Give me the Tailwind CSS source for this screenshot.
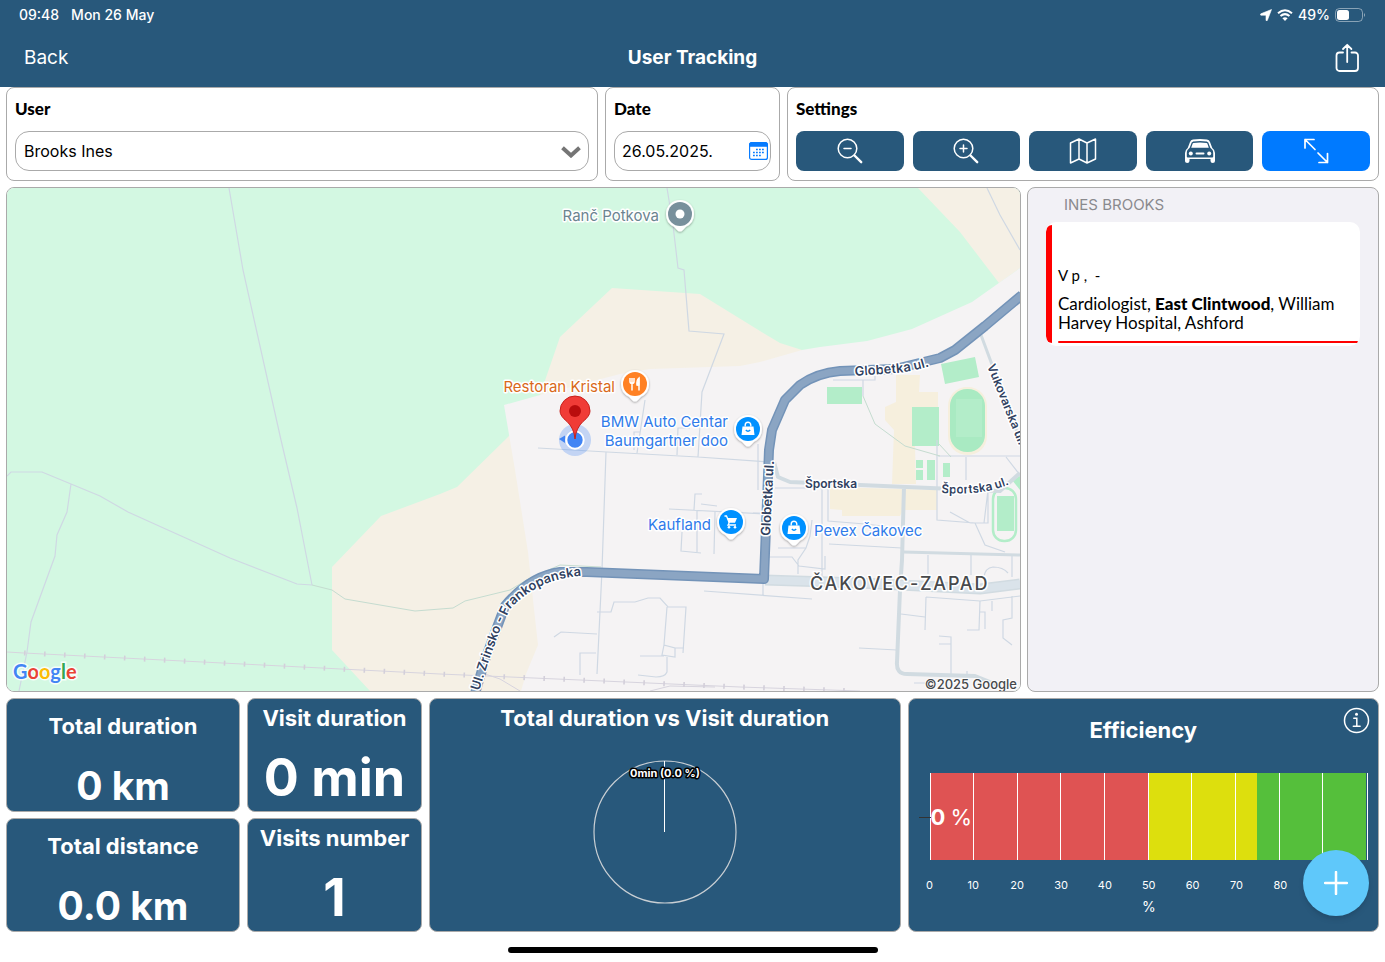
<!DOCTYPE html>
<html lang="en">
<head>
    <meta charset="UTF-8">
    <meta name="viewport" content="width=device-width, initial-scale=1.0">
    <title>User Tracking</title>
    <script src="https://cdn.jsdelivr.net/npm/@tailwindcss/browser@4"></script>
</head>
<body class="flex min-h-screen flex-col bg-white font-['Inter',sans-serif] text-black">
    <!-- Status bar + navigation -->
    <header class="bg-[#28587b] text-white">
        <div class="flex h-[29px] items-center justify-between px-[19px] text-[14px] font-medium">
            <div class="flex gap-3">
                <span>09:48</span>
                <span>Mon 26 May</span>
            </div>
            <div class="flex items-center gap-[5px]">
                <svg class="h-3 w-3" viewBox="0 0 12 12" fill="currentColor"><path d="M11.500.5 7.300 11.500Q6.600 12.400 6 11.500V6.200H.8Q-.4 5.600.8 4.800Z" stroke="currentColor" stroke-width=".6"/></svg>
                <svg class="h-3 w-4" viewBox="0 0 16 12" fill="none" stroke="currentColor" stroke-width="2"><path d="M1 4.300Q8-1.800 15 4.300M3.500 7Q8 3.200 12.500 7"/><path d="M8 12 5.400 9.300Q8 7.300 10.600 9.300Z" fill="currentColor" stroke="none"/></svg>
                <span>49%</span>
                <svg class="h-[14px] w-[31px]" viewBox="0 0 31 14"><rect x=".5" y=".5" width="27" height="13" rx="4" fill="none" stroke="#fff" stroke-opacity=".45"/><rect x="2" y="2" width="12" height="10" rx="2.500" fill="#fff"/><path d="M29 5v4q2-2 0-4" fill="#fff" fill-opacity=".5"/></svg>
            </div>
        </div>
        <div class="grid h-[58px] grid-cols-3 items-center px-6">
            <a href="#" class="justify-self-start text-[19px]">Back</a>
            <h1 class="justify-self-center text-[19px] font-bold">User Tracking</h1>
            <button type="button" aria-label="Share" class="justify-self-end">
                <svg class="h-[30px] w-7" viewBox="0 0 28 30" fill="none" stroke="#fff" stroke-width="1.800" stroke-linecap="round" stroke-linejoin="round"><path d="M10 9.500H6.500A3 3 0 0 0 3.500 12.500V25A3 3 0 0 0 6.500 28H22A3 3 0 0 0 25 25V12.500A3 3 0 0 0 22 9.500H18.500M14.200 19V2M10 6l4.200-4.200L18.400 6"/></svg>
            </button>
        </div>
    </header>

    <main class="flex flex-1 flex-col gap-[6px] px-[6px]">
        <!-- Filters -->
        <div class="grid grid-cols-[1fr_175px_1fr] gap-[7px]">
            <section class="h-[94px] rounded-lg border border-[#aaa] px-2 pt-[9px]">
                <label for="user" class="block font-['Lato',sans-serif] text-[17px] leading-6 font-black">User</label>
                <div class="relative mt-[10px]">
                    <select id="user" class="block h-10 w-full appearance-none rounded-[14px] border border-[#aaa] bg-white px-2 text-base">
                        <option>Brooks Ines</option>
                    </select>
                    <svg class="pointer-events-none absolute top-[15px] right-2 h-3 w-5" viewBox="0 0 20 12" fill="none" stroke="#757575" stroke-width="4"><path d="M1.500 1.800 10 9.500 18.500 1.800"/></svg>
                </div>
            </section>
            <section class="h-[94px] rounded-lg border border-[#aaa] px-2 pt-[9px]">
                <label for="date" class="block font-['Lato',sans-serif] text-[17px] leading-6 font-black">Date</label>
                <div class="relative mt-[10px]">
                    <input id="date" type="text" value="26.05.2025." class="block h-10 w-full rounded-[14px] border border-[#aaa] bg-white pr-7 pl-[7px] text-base">
                    <svg class="pointer-events-none absolute top-[11px] right-[3px] h-[18px] w-[19px]" viewBox="0 0 19 18" fill="none"><rect x=".6" y=".6" width="17.800" height="16.800" rx="2" fill="#fff" stroke="#087cff" stroke-width="1.200"/><path d="M.6 4.200V2.500Q.6.6 2.500.6h14q1.900 0 1.900 1.900v1.700Z" fill="#087cff" stroke="#087cff"/><path d="M7 7.500h9M4 10.500h12M4 13.500h9" stroke="#087cff" stroke-width="1.500" stroke-dasharray="1.800 1.200"/></svg>
                </div>
            </section>
            <section class="h-[94px] rounded-lg border border-[#aaa] px-2 pt-[9px]">
                <h2 class="font-['Lato',sans-serif] text-[17px] leading-6 font-black">Settings</h2>
                <div class="mt-[10px] grid grid-cols-5 gap-[9px]">
                    <button type="button" aria-label="Zoom out" class="flex h-10 items-center justify-center rounded-lg bg-[#28587b]">
                        <svg class="h-[26px] w-[26px]" viewBox="0 0 26 26" fill="none" stroke="#fff" stroke-width="1.500" stroke-linecap="round"><circle cx="10.500" cy="10.500" r="9.300"/><path d="M7 10.500h7"/><path d="m17.500 17.500 6.700 6.700" stroke-width="2.400"/></svg>
                    </button>
                    <button type="button" aria-label="Zoom in" class="flex h-10 items-center justify-center rounded-lg bg-[#28587b]">
                        <svg class="h-[26px] w-[26px]" viewBox="0 0 26 26" fill="none" stroke="#fff" stroke-width="1.500" stroke-linecap="round"><circle cx="10.500" cy="10.500" r="9.300"/><path d="M7 10.500h7M10.500 7v7"/><path d="m17.500 17.500 6.700 6.700" stroke-width="2.400"/></svg>
                    </button>
                    <button type="button" aria-label="Map type" class="flex h-10 items-center justify-center rounded-lg bg-[#28587b]">
                        <svg class="h-[26px] w-[28px]" viewBox="0 0 28 26" fill="none" stroke="#fff" stroke-width="1.500" stroke-linejoin="round"><path d="m1.500 5 8.500-4 8 4 8.500-4v20L18 25l-8-4-8.500 4ZM10 1v20M18 5v20"/></svg>
                    </button>
                    <button type="button" aria-label="Traffic" class="flex h-10 items-center justify-center rounded-lg bg-[#28587b]">
                        <svg class="h-6 w-[30px]" viewBox="0 0 30 24"><path fill="#fff" fill-rule="evenodd" d="M8 0.500Q15-.5 22 .5q2.200.4 3 2.500l2.300 6Q30 11 30 14v8q0 2-2.200 2T25.500 22v-2h-21v2q0 2-2.300 2T0 22v-8q0-3 2.700-5L5 3q.8-2.100 3-2.500ZM8.200 2.500 6.700 3.600 4.700 8.800 2.500 11Q1.800 12 1.800 14v3.500q0 1 1 1H27.200q1 0 1-1V14q0-2-.7-3L25.300 8.800 23.300 3.600 21.800 2.500Q15 1.500 8.200 2.500Z"/><path fill="#fff" d="M8.500 4Q15 3 21.500 4q.8.200 1 1l1.300 3.700H6.200L7.500 5q.2-.8 1-1Z"/><circle cx="5.800" cy="14.500" r="2" fill="#fff"/><circle cx="24.200" cy="14.500" r="2" fill="#fff"/><path d="M11.500 14.500h7" stroke="#fff" stroke-width="2" stroke-linecap="round"/></svg>
                    </button>
                    <button type="button" aria-label="Fit route" class="flex h-10 items-center justify-center rounded-lg bg-[#007aff]">
                        <svg class="h-[26px] w-[26px]" viewBox="0 0 26 26" fill="none" stroke="#fff" stroke-width="1.700" stroke-linecap="round" stroke-linejoin="round"><path d="M2 10V1.500h9M2 1.500 12 11.500M24.500 15.500V24.500H16M24.500 24.500 15 15"/></svg>
                    </button>
                </div>
            </section>
        </div>

        <div class="grid min-h-[400px] flex-1 grid-cols-[1fr_352px] gap-[6px]">
            <!-- Map -->
            <section aria-label="Map" class="relative overflow-hidden rounded-lg border border-[#aaa]">
                <svg class="absolute inset-0 h-full w-full font-['Inter',sans-serif]" viewBox="7 188 1013 503" preserveAspectRatio="xMidYMid slice" fill="none">
                    <defs>
                        <path id="pin" d="M0 17.500Q-1.500 17.500-3 16L-6 12.700Q-14 9-14 0A14 14 0 0 1 14 0Q14 9 6 12.700L3 16Q1.500 17.500 0 17.500Z" fill="#fff" filter="url(#drop)"/>
                        <filter id="drop" x="-30%" y="-30%" width="160%" height="160%"><feDropShadow dx="0" dy="1" stdDeviation="1" flood-opacity=".35"/></filter>
                        <g id="bag"><path d="M-5.500-2.500h11l1 8.500h-13Z" fill="#fff"/><path d="M-2.800-2.500V-4a2.800 2.800 0 0 1 5.600 0v1.500" stroke="#fff" stroke-width="1.400"/><path d="M-2.200 1q2.200 2.500 4.400 0" stroke="#0091ff" stroke-width="1.300"/></g>
                        <path id="zrinsko" d="M479 691 488 663 500 630 510 609C530 588 552 577 590 575"/>
                        <path id="globetka" d="M855 376 895 373Q920 371 940 362"/>
                        <path id="sportska" d="M941 493Q985 496 1012 483"/>
                    </defs>
                    <!-- land cover -->
                    <rect x="7" y="188" width="1013" height="503" fill="#d3f8e2"/>
                    <path fill="#f5f0e5" d="M918 188 960 232 999 283 1020 268V188ZM370 691 332 650V567L381 516 440 494 457 487 508 437 540 395 560 337 612 288 700 294 760 331 780 343 802 350 700 500 560 691Z"/>
                    <path fill="#f5f3f4" d="M504 405 540 395 620 374 650 369 740 366 760 362 802 350 820 347 867 341 912 329 972 302 1020 268V691H521L526 674 538 645 533 600 528 552 515 470Z"/>
                    <path fill="#f6efdd" d="M896 375H920L919 392H938V446H915L916 484H892L894 430 885 420V407L896 402ZM830 487 937 490V510H903L900 516H842V510L830 509Z"/>
                    <rect x="948" y="387" width="39" height="68" rx="19" fill="#f6efdd"/>
                    <rect x="950" y="389" width="35" height="63" rx="17" fill="#a9eac2"/>
                    <path fill="#b3edc9" d="M956 399h26v38h-26ZM827 387h35v17h-35ZM912 407h27v39h-27ZM941 364 975 357 979 377 945 384ZM916 460h7v8h-7ZM916 470h7v10h-7ZM927 460h8v20h-8ZM943 463h7v14h-7ZM997 496h17v35h-17ZM1012 480 1020 476V490Z"/>
                    <rect x="993" y="488" width="23" height="53" rx="11" stroke="#b3edc9" stroke-width="2.500"/>
                    <!-- paths and minor streets -->
                    <g stroke="#cfd8e3" stroke-width="1.200">
                        <path d="M229 188 243 270 281 440 297 508 312 585M987 188 1000 215 1020 250"/>
                        <path d="M7 476 11 472H42L71 484 100 496 128 512 230 558 297 584 312 585M71 484 67 512 57 535 55 556 31 622 27 652 19 691"/>
                        <path d="M667 188 673 225 678 268 684 270 689 331 724 334 702 392 698 457M538 448 607 452 698 457 768 462M606 452 602 570 597 674M645 400 637 453M677 455 678 428H690M634 450V432H640"/>
                        <path d="M758 444V490M669 509 768 514M694 510 695 494H702M701 504 717 506M697 511V552M715 512 714 554M682 532 681 551 701 553"/>
                        <path d="M597 612H611L614 602H635L648 598H660L668 607H686L683 653M667 607 664 645 675 648V657L662 655 664 645M675 648H684M640 656H664M667 657V672Q665 677 656 677L638 675M597 634 561 632 554 637M596 653H580V675M704 591 812 599M763 583V595"/>
                        <path d="M753 513H770M775 488H822V578M828 488V521L865 524 900 528M778 548H806L810 536 812 520M769 557H792L799 566 825 569V556M798 574V560L806 548M829 544 902 548M870 528Q880 537 887 528"/>
                        <path d="M833 380H875V376M863 380V396M937 440V520L975 523 985 545 1005 552M950 512 970 523H988V490L984 523M966 457V480M938 456H1020M928 555V574M971 555V575M1012 555V577M984 577Q985 568 993 567 1003 567 1008 573M926 597 980 601 1020 596M926 597 925 630M980 601 979 630H967M980 612H985V629M992 601V611M1012 596V618L1003 620V638L1012 645M901 614 925 617M939 636 951 637V675M939 644H951M859 648 897 650M967 671V676M914 683H925M1006 457 1020 475"/>
                    </g>
                    <path d="M312 585 332 590 345 599 415 611 453 608 465 601 510 590 530 578 560 565 601 567M863 396 875 424 905 446 940 456M939 444 951 457" stroke="#c5dcd0"/>
                    <path d="M7 652 24 653 440 674 580 680 740 687 860 691M485 674 500 679 520 691M650 691 670 686 715 687" stroke="#d7d4de"/>
                    <path d="M24 653 440 674 580 680 740 687 860 691" stroke="#d3cfda" stroke-width="5" stroke-dasharray="1.600 18.400"/>
                    <!-- streets -->
                    <g stroke="#d1dbe1" stroke-linejoin="round">
                        <path stroke-width="4" d="M774 462 778 477 790 482 1000 491 1020 473M904 487 902 560 900 590 897 662Q896 674 907 674L975 676 1000 686"/>
                        <path stroke-width="3" d="M903 552 1020 555M981 335 1020 440"/>
                        <path stroke-width="11" d="M765 580 860 583 980 589 1020 584"/>
                    </g>
                    <path d="M765 580 860 583 980 589 1020 584" stroke="#dae3ea" stroke-width="8"/>
                    <!-- main road -->
                    <g stroke-linejoin="round">
                        <path stroke="#7393b8" stroke-width="10" d="M474 697 485 660 499 622 505 606Q530 576 560 572L587 572 764 579 769 450 772 430 785 400 800 385Q817 373 840 371L895 369 940 358 955 350 985 326 1022 295"/>
                        <path stroke="#8ba5c3" stroke-width="7" d="M474 697 485 660 499 622 505 606Q530 576 560 572L587 572 764 579 769 450 772 430 785 400 800 385Q817 373 840 371L895 369 940 358 955 350 985 326 1022 295"/>
                    </g>
                    <!-- street names -->
                    <g class="fill-[#30415f] stroke-white font-semibold [paint-order:stroke]" font-size="13" stroke-width="3" stroke-linejoin="round">
                        <text><textPath href="#zrinsko">Ul. Zrinsko - Frankopanska</textPath></text>
                        <text><textPath href="#globetka">Globetka ul.</textPath></text>
                        <text font-size="12"><textPath href="#sportska">Športska ul.</textPath></text>
                        <text transform="translate(770 536) rotate(-87)">Globetka ul.</text>
                        <text font-size="12" x="805" y="488">Športska</text>
                        <text font-size="12" transform="translate(987 366) rotate(68)">Vukovarska ul.</text>
                        <text class="fill-[#47494c] font-medium tracking-widest" font-size="18" x="810" y="590">ČAKOVEC-ZAPAD</text>
                    </g>
                    <!-- places -->
                    <g class="stroke-white [paint-order:stroke]" font-size="15" stroke-width="3" stroke-linejoin="round">
                        <text class="fill-[#6b8490]" x="659" y="221" text-anchor="end">Ranč Potkova</text>
                        <text class="fill-[#d9691a]" x="615" y="392" text-anchor="end">Restoran Kristal</text>
                        <g class="fill-[#2f7bea]">
                            <text x="728" y="427" text-anchor="end">BMW Auto Centar</text>
                            <text x="728" y="446" text-anchor="end">Baumgartner doo</text>
                            <text x="711" y="530" text-anchor="end">Kaufland</text>
                            <text x="814" y="536">Pevex Čakovec</text>
                        </g>
                    </g>
                    <g transform="translate(680 214)"><use href="#pin"/><circle r="12" fill="#78909c"/><circle r="4.500" fill="#fff"/></g>
                    <g transform="translate(635 384)"><use href="#pin"/><circle r="12" fill="#ff8124"/><path d="M-5-6V-2.500Q-5-.5-3-.5T-1-2.500V-6M-3-6V6.500M4 6.500V-6Q1.500-4 2 1H4" stroke="#fff" stroke-width="1.500"/><path d="M4.500-6Q1.500-4 2 1.500H4.500Z" fill="#fff"/></g>
                    <g transform="translate(748 429)"><use href="#pin"/><circle r="12" fill="#0091ff"/><use href="#bag"/></g>
                    <g transform="translate(794 528)"><use href="#pin"/><circle r="12" fill="#0091ff"/><use href="#bag"/></g>
                    <g transform="translate(731 522)"><use href="#pin"/><circle r="12" fill="#0091ff"/><path d="M-3.500-4H6L4 .8H-2.500Z" fill="#fff"/><path d="M-6.500-6H-4.500L-1.800.8-3 3H5" stroke="#fff" stroke-width="1.300"/><circle cx="-2" cy="5.300" r="1.300" fill="#fff"/><circle cx="4" cy="5.300" r="1.300" fill="#fff"/></g>
                    <!-- current position -->
                    <circle cx="575" cy="440" r="16" fill="#4285f4" fill-opacity=".28"/>
                    <path d="M559 439 565 435.500V443Z" fill="#4285f4"/>
                    <circle cx="575" cy="440" r="8.700" fill="#4285f4" stroke="#fff" stroke-width="2"/>
                    <path d="M575 439Q574 428 567 421.500 560 416 560 411A15 15 0 0 1 590 411Q590 416 583 421.500 576 428 575 439Z" fill="#f03c37" stroke="#c7201c"/>
                    <circle cx="575" cy="411" r="6" fill="#b90d0d"/>
                    <!-- attribution -->
                    <g class="font-['Lato',sans-serif] stroke-white/80 font-bold [paint-order:stroke]" font-size="20" stroke-width="3">
                        <text x="13" y="679"><tspan fill="#4285f4">G</tspan><tspan fill="#ea4335">o</tspan><tspan fill="#fbbc05">o</tspan><tspan fill="#4285f4">g</tspan><tspan fill="#34a853">l</tspan><tspan fill="#ea4335">e</tspan></text>
                    </g>
                    <text class="fill-[#47494c] stroke-white/80 font-medium [paint-order:stroke]" font-size="13" stroke-width="2" x="1017" y="689" text-anchor="end">©2025 Google</text>
                </svg>
            </section>

            <!-- Visits -->
            <aside class="rounded-lg border border-[#aaa] bg-[#f2f1f6] px-[18px] pt-2">
                <h2 class="pl-[18px] text-[15px] leading-[18px] text-[#8a8a8e]">INES BROOKS</h2>
                <article class="relative mt-2 h-[124px] overflow-hidden rounded-[10px] bg-white pt-[43px] pl-3 font-['Lato',sans-serif]">
                    <span class="absolute top-[3px] left-0 h-[118px] w-[6px] rounded-l-md bg-[#ff0000]"></span>
                    <p class="text-[15px] leading-5">V p ,&nbsp; -</p>
                    <p class="mt-[9px] text-[17px] leading-[19px]">Cardiologist, <b class="font-black">East Clintwood</b>, William Harvey Hospital, Ashford</p>
                    <span class="absolute right-[2px] bottom-[3px] left-3 h-[2px] rounded-full bg-[#ff0000]"></span>
                </article>
            </aside>
        </div>

        <!-- Statistics -->
        <div class="grid h-[234px] grid-cols-[234px_175px_1fr_1fr] grid-rows-2 gap-x-[7px] gap-y-[6px] text-center font-bold text-white">
            <section class="rounded-lg border border-[#aaa] bg-[#28587b] pt-3">
                <h2 class="text-[22px] leading-[30px]">Total duration</h2>
                <p class="mt-[20px] text-[39px] leading-[50px]">0 km</p>
            </section>
            <section class="rounded-lg border border-[#aaa] bg-[#28587b] pt-1">
                <h2 class="text-[22px] leading-[30px]">Visit duration</h2>
                <p class="mt-[15px] text-[52px] leading-[60px]">0 min</p>
            </section>
            <section class="row-span-2 rounded-lg border border-[#aaa] bg-[#28587b] pt-1">
                <h2 class="text-[22px] leading-[30px]">Total duration vs Visit duration</h2>
                <svg class="mx-auto mt-[27px] h-36 w-36" viewBox="0 0 144 144" fill="none"><circle cx="72" cy="72" r="71" stroke="#c9cfd4" stroke-width="1.200"/><path d="M71.500 1v71" stroke="#fff"/><text x="72" y="17" text-anchor="middle" font-size="11" class="fill-white stroke-black font-bold [paint-order:stroke]" stroke-width="3" stroke-linejoin="round">0min (0.0 %)</text></svg>
            </section>
            <section class="relative row-span-2 rounded-lg border border-[#aaa] bg-[#28587b] px-[21px] pt-4">
                <h2 class="text-[22px] leading-[30px]">Efficiency</h2>
                <button type="button" aria-label="Efficiency info" class="absolute top-[8px] right-[8px]">
                    <svg class="h-[27px] w-[27px]" viewBox="0 0 27 27" fill="none" stroke="#fff" stroke-width="1.500"><circle cx="13.500" cy="13.500" r="12"/><path d="M10.800 11.300h3v8M10.300 19.300h6.800" stroke-linecap="round"/><circle cx="13.500" cy="7.300" r="1.500" fill="#fff" stroke="none"/></svg>
                </button>
                <div class="relative mt-7 mr-[-11px] h-[87px]">
                    <div class="flex h-full pr-[2px]">
                        <div class="w-1/2 bg-[#df5353]"></div>
                        <div class="w-1/4 bg-[#dddf0d]"></div>
                        <div class="w-1/4 bg-[#55bf3b]"></div>
                    </div>
                    <div class="absolute inset-0 grid grid-cols-10 divide-x divide-white border-x border-white">
                        <i></i><i></i><i></i><i></i><i></i><i></i><i></i><i></i><i></i><i></i>
                    </div>
                    <span class="absolute top-[44px] left-[-11px] h-px w-3 bg-[#333]"></span>
                    <p class="absolute top-[28px] left-[1px] text-[22px] leading-[32px]">0 <span class="font-normal">%</span></p>
                </div>
                <div class="mt-[17px] mr-[-33px] ml-[-22px] grid grid-cols-11 text-[11px] leading-4 font-normal">
                    <span>0</span><span>10</span><span>20</span><span>30</span><span>40</span><span>50</span><span>60</span><span>70</span><span>80</span>
                </div>
                <p class="mt-[5px] mr-[-11px] text-[14px] leading-[18px] font-normal">%</p>
                <button type="button" aria-label="Add" class="absolute right-[9px] bottom-[15px] flex h-[66px] w-[66px] items-center justify-center rounded-full bg-[#5fc8fa] shadow-md">
                    <svg class="h-6 w-6" viewBox="0 0 24 24" stroke="#fff" stroke-width="2.500" stroke-linecap="round"><path d="M12 1v22M1 12h22"/></svg>
                </button>
            </section>
            <section class="rounded-lg border border-[#aaa] bg-[#28587b] pt-3">
                <h2 class="text-[22px] leading-[30px]">Total distance</h2>
                <p class="mt-[20px] text-[39px] leading-[50px]">0.0 km</p>
            </section>
            <section class="rounded-lg border border-[#aaa] bg-[#28587b] pt-1">
                <h2 class="text-[22px] leading-[30px]">Visits number</h2>
                <p class="mt-[15px] text-[52px] leading-[60px]">1</p>
            </section>
        </div>
    </main>

    <!-- Home indicator -->
    <footer class="flex h-[30px] justify-center pt-[15px]">
        <div class="h-[6px] w-[370px] rounded-full bg-black"></div>
    </footer>
</body>
</html>
